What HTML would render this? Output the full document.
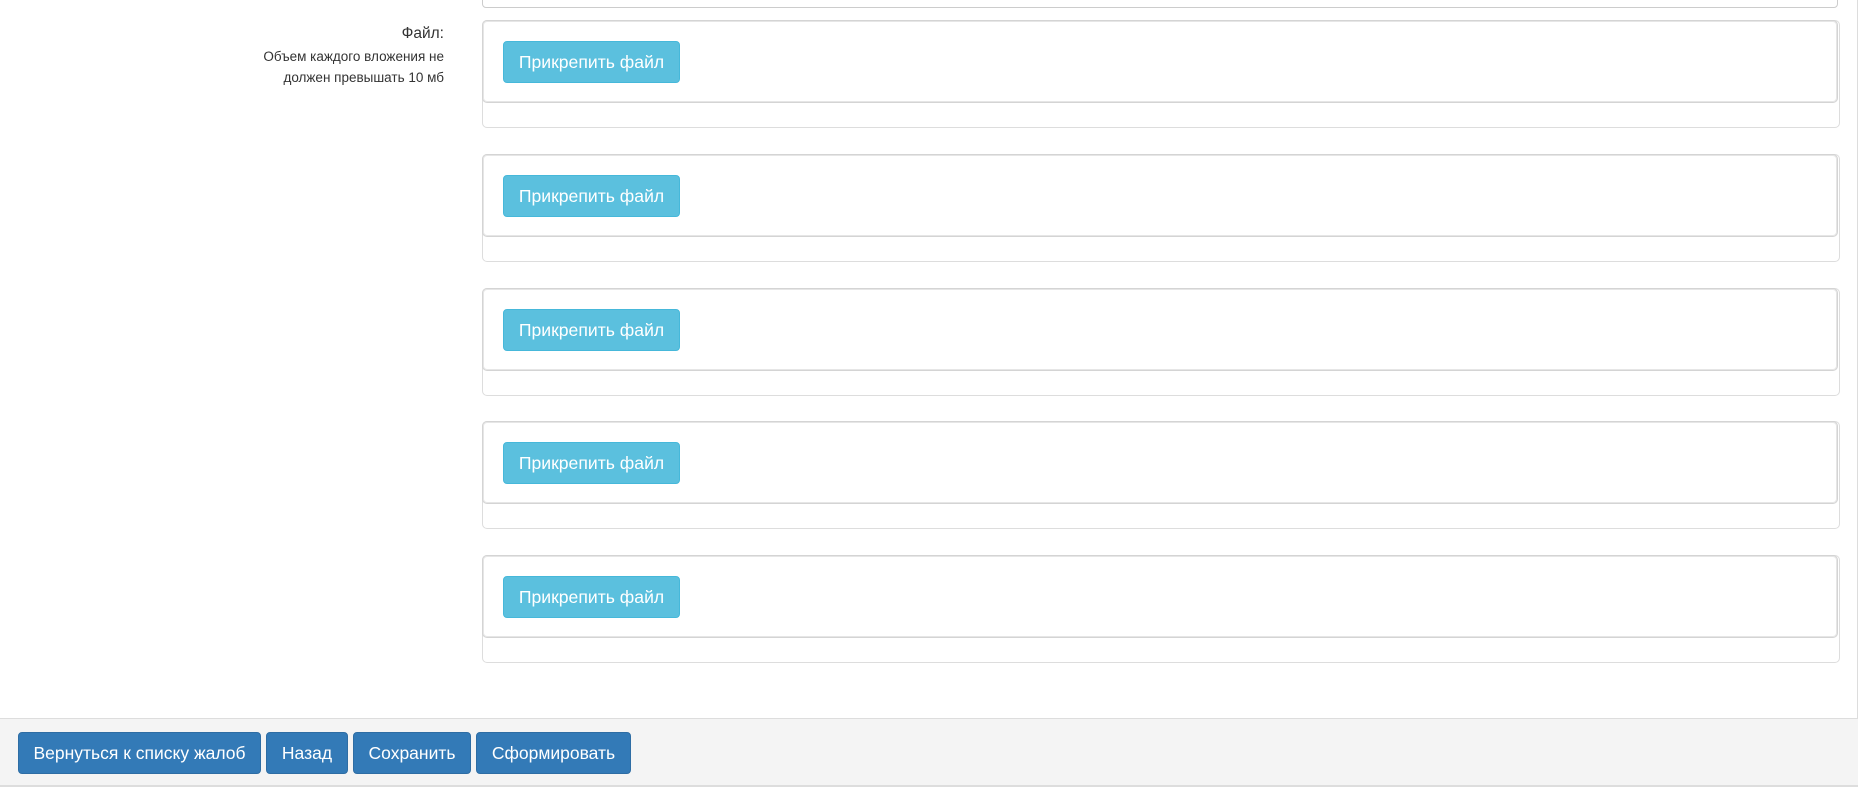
<!DOCTYPE html>
<html><head><meta charset="utf-8"><style>
body{margin:0;width:1861px;height:791px;background:#fff;font-family:"Liberation Sans",Arial,sans-serif;position:relative;overflow:hidden;color:#333}
.abs{position:absolute;box-sizing:border-box}
.ta{left:482px;top:-10px;width:1356px;height:18px;border:1px solid #ccc;border-radius:4px}
.outer{left:482px;width:1358px;height:108px;border:1px solid #ddd;border-radius:5px}
.inner{left:482px;width:1356px;height:83px;border:1px solid #d4d4d4;box-shadow:0 0 0 1px #e6e6e6 inset;border-radius:5px;background:#fff}
.btn{left:503px;width:177px;height:42px;background:#5bc0de;border:1px solid #46b8da;border-radius:4px;color:#fff;font-size:17.6px;line-height:40px;text-align:center}
.lab{right:1417px;text-align:right;white-space:nowrap}
.foot{left:0;top:718px;width:1858px;height:69px;background:#f4f4f4;border-top:1px solid #ddd;border-bottom:2px solid #ddd}
.fb{top:732px;height:42px;background:#337ab7;border:1px solid #2e6da4;border-radius:4px;color:#fff;font-size:17.5px;line-height:40px;text-align:center}
.vline{left:1857px;top:0;width:1px;height:718px;background:#ddd}
</style></head><body>
<div class="abs ta"></div>
<div class="abs lab" style="top:25px;font-size:15.5px">Файл:</div>
<div class="abs lab" style="top:46px;font-size:13.5px;line-height:21px">Объем каждого вложения не<br>должен превышать 10 мб</div>

<div class="abs outer" style="top:20px"></div><div class="abs inner" style="top:20px"></div><div class="abs btn" style="top:41px">Прикрепить файл</div>
<div class="abs outer" style="top:154px"></div><div class="abs inner" style="top:154px"></div><div class="abs btn" style="top:175px">Прикрепить файл</div>
<div class="abs outer" style="top:288px"></div><div class="abs inner" style="top:288px"></div><div class="abs btn" style="top:309px">Прикрепить файл</div>
<div class="abs outer" style="top:421px"></div><div class="abs inner" style="top:421px"></div><div class="abs btn" style="top:442px">Прикрепить файл</div>
<div class="abs outer" style="top:555px"></div><div class="abs inner" style="top:555px"></div><div class="abs btn" style="top:576px">Прикрепить файл</div>

<div class="abs vline"></div>
<div class="abs foot"></div>
<div class="abs fb" style="left:18px;width:243px">Вернуться к списку жалоб</div>
<div class="abs fb" style="left:266px;width:82px">Назад</div>
<div class="abs fb" style="left:353px;width:118px">Сохранить</div>
<div class="abs fb" style="left:476px;width:155px">Сформировать</div>
</body></html>
